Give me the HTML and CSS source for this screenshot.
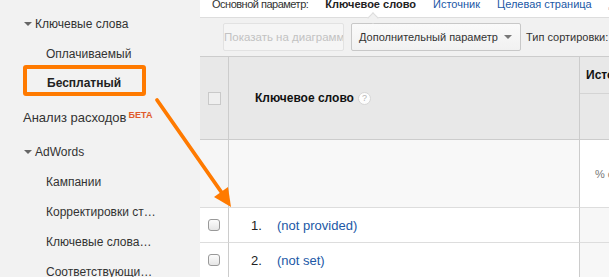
FILE: index.html
```html
<!DOCTYPE html>
<html lang="ru">
<head>
    <meta charset="UTF-8">
    <meta name="viewport" content="width=device-width, initial-scale=1.0">
    <title>Ключевые слова — Бесплатный</title>
    <link rel="stylesheet" href="styles.css">
</head>
<body>
    <div class="page">
        <nav class="sidebar">
            <ul class="menu">
                <li class="group"><span class="caret"></span>Ключевые слова</li>
                <li class="sub">Оплачиваемый</li>
                <li class="sub active">Бесплатный</li>
                <li class="item">Анализ расходов<sup class="beta">БЕТА</sup></li>
                <li class="group adwords"><span class="caret"></span>AdWords</li>
                <li class="sub">Кампании</li>
                <li class="sub">Корректировки ст…</li>
                <li class="sub">Ключевые слова…</li>
                <li class="sub">Соответствующи…</li>
            </ul>
            <!-- annotation box -->
            <div class="highlight"></div>
        </nav>

        <div class="main">
            <div class="dims">
                <span class="dims-label">Основной параметр:</span>
                <span class="dim current">Ключевое слово</span>
                <a class="dim" href="#">Источник</a>
                <a class="dim" href="#">Целевая страница</a>
                <a class="dim" href="#">Другое</a>
            </div>

            <div class="toolbar">
                <button class="btn btn-chart" disabled><span>Показать на диаграмме</span></button>
                <button class="btn btn-dim">Дополнительный параметр <span class="drop"></span></button>
                <span class="sort-label">Тип сортировки:</span>
            </div>

            <div class="table">
                <div class="cell head check-cell"><span class="box"></span></div>
                <div class="cell head key-head">Ключевое слово <span class="help">?</span></div>
                <div class="cell head metric-head">
                    <div class="metric-title">Источники трафика</div>
                    <div class="metric-sub"></div>
                </div>

                <div class="cell total check-cell"></div>
                <div class="cell total key-cell"></div>
                <div class="cell total metric-cell"><span class="pct">% от общего</span></div>

                <div class="cell row check-cell"><span class="tick"></span></div>
                <div class="cell row key-cell"><span class="num">1.</span><a href="#">(not provided)</a></div>
                <div class="cell row metric-cell"></div>

                <div class="cell row check-cell"><span class="tick"></span></div>
                <div class="cell row key-cell"><span class="num">2.</span><a href="#">(not set)</a></div>
                <div class="cell row metric-cell"></div>
            </div>
        </div>
    </div>

    <!-- annotation arrow -->
    <svg class="arrow" width="609" height="277" viewBox="0 0 609 277">
        <line x1="157" y1="100" x2="222" y2="193" stroke="#ff7a00" stroke-width="3.8" stroke-linecap="round"/>
        <polygon points="231,207 214,197 228,187" fill="#ff7a00"/>
    </svg>
</body>
</html>
```

FILE: styles.css
```css
* {
    box-sizing: border-box;
    margin: 0;
    padding: 0;
}

body {
    width: 609px;
    height: 277px;
    overflow: hidden;
    position: relative;
    background: #fff;
    color: #333;
    font-family: 'Liberation Sans', Arial, sans-serif;
}

a {
    color: #2158a6;
    text-decoration: none;
}

.page {
    display: flex;
    height: 100%;
}

/* Sidebar */
.sidebar {
    position: relative;
    width: 200px;
    flex-shrink: 0;
    background: #f2f2f2;
    padding-top: 9px;
}

.menu {
    list-style: none;
    font-size: 12px;
    color: #333;
}

.menu li {
    height: 30px;
    line-height: 30px;
    white-space: nowrap;
}

.menu .group {
    display: flex;
    align-items: center;
    padding-left: 24px;
}

.menu .adwords {
    margin-top: 4px;
}

.menu .sub {
    padding-left: 46px;
}

.menu .active {
    font-weight: bold;
    color: #222;
    padding-left: 47px;
    margin-top: -1px;
    margin-bottom: 1px;
}

.menu .item {
    padding-left: 23px;
    margin-top: 5px;
    font-size: 13px;
}

.caret {
    width: 0;
    height: 0;
    margin-right: 3px;
    border-left: 4px solid transparent;
    border-right: 4px solid transparent;
    border-top: 4px solid #666;
}

.beta {
    margin-left: 2px;
    font-size: 9px;
    font-weight: bold;
    color: #e05a2b;
    vertical-align: 4px;
    line-height: 0;
}

.highlight {
    position: absolute;
    left: 23px;
    top: 65px;
    width: 123px;
    height: 31px;
    border: 4px solid #ff7a00;
    border-radius: 3px;
}

/* Main */
.main {
    flex: 1;
    min-width: 0;
    overflow: hidden;
}

.dims {
    position: relative;
    display: flex;
    align-items: baseline;
    height: 18px;
    padding-left: 12px;
    font-size: 11px;
    line-height: 11px;
    white-space: nowrap;
    border-bottom: 1px solid #ddd;
}

.dims span,
.dims a {
    margin-top: -1px;
}

.dims-label {
    margin-right: 17px;
    letter-spacing: -0.5px;
}

.dim {
    margin-right: 17px;
}

.current {
    position: relative;
    font-weight: bold;
    color: #222;
}

/* notch under the current dimension */
.current::after {
    content: '';
    position: absolute;
    left: 44px;
    top: 15px;
    width: 7px;
    height: 7px;
    background: #f1f1f1;
    border-top: 1px solid #ddd;
    border-left: 1px solid #ddd;
    transform: rotate(45deg);
}

.toolbar {
    display: flex;
    align-items: center;
    gap: 7px;
    height: 38px;
    padding-left: 23px;
    background: #f1f1f1;
    white-space: nowrap;
    font-size: 11px;
}

.btn {
    height: 28px;
    font-family: inherit;
    font-size: 11px;
    border-radius: 2px;
    text-align: left;
}

.btn-chart {
    display: flex;
    align-items: center;
    width: 121px;
    overflow: hidden;
    font-size: 11.5px;
    color: #c2c2c2;
    background: #f5f5f5;
    border: 1px solid #e2e2e2;
}

.btn-chart span {
    flex-shrink: 0;
}

.btn-dim {
    display: flex;
    align-items: center;
    justify-content: space-between;
    width: 170px;
    padding: 0 7px;
    color: #333;
    background: linear-gradient(#fafafa, #f1f1f1);
    border: 1px solid #c8c8c8;
}

.drop {
    width: 0;
    height: 0;
    margin-right: 1px;
    border-left: 4px solid transparent;
    border-right: 4px solid transparent;
    border-top: 4px solid #777;
}

.sort-label {
    margin-left: -2px;
    color: #333;
}

/* Table */
.table {
    display: grid;
    grid-template-columns: 29px 351px 1fr;
    grid-template-rows: 83px 68px 35px 35px;
    border-top: 1px solid #ccc;
}

.cell {
    border-right: 1px solid #ccc;
    border-bottom: 1px solid #ddd;
    display: flex;
    align-items: center;
}

.head {
    background: #e8e8e8;
    border-bottom-color: #ccc;
}

.check-cell {
    justify-content: center;
}

.box {
    width: 13px;
    height: 13px;
    border: 1px solid #c9c9c9;
    background: #efefef;
}

.key-head {
    padding-left: 26px;
    font-size: 12px;
    font-weight: bold;
    color: #111;
}

.help {
    display: inline-flex;
    align-items: center;
    justify-content: center;
    width: 13px;
    height: 13px;
    margin-left: 4px;
    border-radius: 50%;
    background: #fdfdfd;
    border: 1px solid #d6d6d6;
    color: #b5b5b5;
    font-size: 9px;
    font-weight: normal;
}

.metric-head {
    flex-direction: column;
    align-items: stretch;
    border-right: none;
    white-space: nowrap;
    overflow: hidden;
}

.metric-title {
    height: 37px;
    line-height: 37px;
    padding-left: 6px;
    font-size: 12px;
    font-weight: bold;
    color: #111;
    border-bottom: 1px solid #d4d4d4;
}

.total.check-cell {
    background: #f6f6f6;
}

.total.key-cell {
    background: #f8f8f8;
}

.metric-cell {
    border-right: none;
    background: #f7f7f7;
    white-space: nowrap;
    overflow: hidden;
}

.total.metric-cell {
    background: #fff;
    padding-left: 15px;
}

.pct {
    font-size: 11px;
    color: #777;
}

.row.key-cell {
    padding-left: 22px;
    font-size: 13px;
}

.num {
    width: 26px;
    color: #222;
}

.tick {
    width: 12px;
    height: 12px;
    border: 1px solid #999;
    border-radius: 3px;
    background: linear-gradient(#fcfcfc, #e6e6e6);
}

.arrow {
    position: absolute;
    left: 0;
    top: 0;
    pointer-events: none;
}
```
